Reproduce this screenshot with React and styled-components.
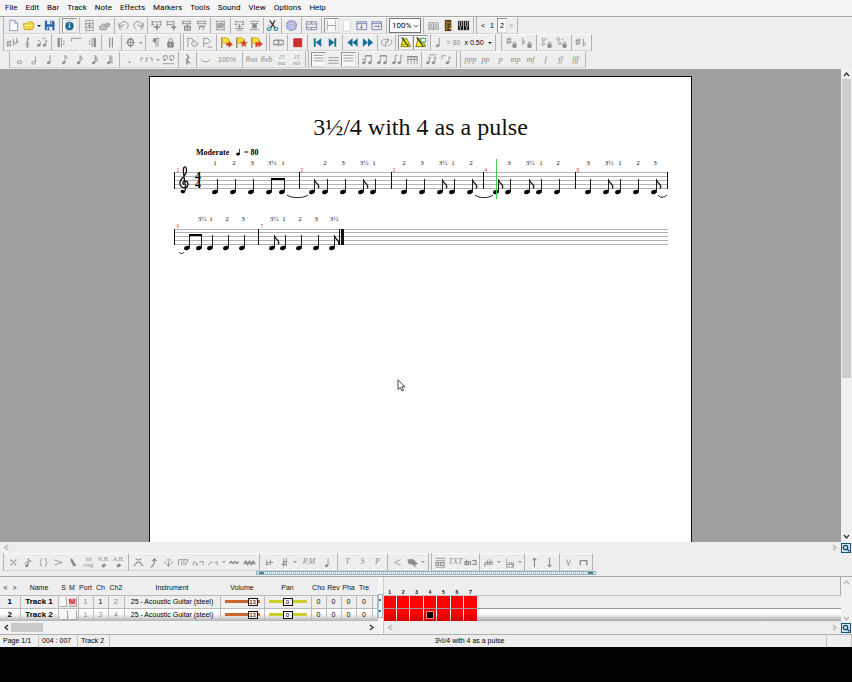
import React from "react";
import styled, { createGlobalStyle, css } from "styled-components";

const Global = createGlobalStyle`
  * { box-sizing: border-box; }
  body { margin: 0; background: #000; }
  button, select, input { font: inherit; color: inherit; margin: 0; }
`;

const LINE = "#b4b4b4";
const SANS = `"Liberation Sans", Arial, sans-serif`;
const UI = `Roboto, "Open Sans", sans-serif`;
const SERIF = `"Liberation Serif", "Times New Roman", serif`;

/* ---------- shell ---------- */

const Shell = styled.div`
  min-height: 100vh;
  padding-bottom: 35px;
  background: #000;
  display: flex;
`;
const Window = styled.div`
  flex: 1;
  min-width: 0;
  display: flex;
  flex-direction: column;
  background: #eee;
  color: #111;
  font: 7px/12px ${SANS};
`;

const MenuBar = styled.nav`
  display: flex;
  gap: 8px;
  height: 17px;
  padding: 0 5px;
  background: #f5f5f5;
  border-bottom: 1px solid #a8a8a8;
`;
const MenuItem = styled.button`
  border: 0;
  padding: 0;
  background: none;
  font: 8px/16px ${UI};
  color: #000;
`;

/* ---------- toolbars ---------- */

const Bar = styled.div`
  display: flex;
  height: ${(p) => p.$h || 17}px;
  padding-left: ${(p) => p.$indent || 3}px;
`;
const Group = styled.div`
  display: flex;
  align-items: center;
  padding: 0 ${(p) => (p.$tight ? 1 : 2)}px;
  border-right: 1px solid ${LINE};
  border-bottom: 1px solid #d4d4d4;
  border-top: 1px solid #fafafa;
`;
const Grip = styled.span`
  width: ${(p) => p.$w || 1}px;
  border-right: 1px solid ${LINE};
`;
const Tool = styled.button`
  display: flex;
  flex-direction: ${(p) => (p.$stack ? "column" : "row")};
  align-items: center;
  justify-content: center;
  width: ${(p) => p.$w || 15}px;
  height: 15px;
  padding: 0;
  border: 1px solid transparent;
  background: none;
  white-space: nowrap;
  font: ${(p) => (p.$stack ? `italic 6px/6px ${SERIF}` : p.$serif ? `italic 8px/12px ${SERIF}` : `7px/12px ${SANS}`)};
  color: ${(p) => (p.$dark ? "#000" : "#8c8c8c")};
  ${(p) =>
    p.$on &&
    css`
      background: #f8f8f8;
      border-color: #8d9296 #dcdcdc #dcdcdc #8d9296;
    `}
`;
const Drop = styled.button`
  width: 6px;
  height: 15px;
  padding: 0;
  border: 0;
  background: none;
  display: flex;
  align-items: center;
  justify-content: center;
  &::after {
    content: "";
    border: 2px solid transparent;
    border-top-color: ${(p) => (p.$dark ? "#222" : "#999")};
    border-bottom: 0;
  }
`;
const SelectWrap = styled.label`
  display: flex;
  align-items: center;
  width: 32px;
  height: 15px;
  border: 1px solid #777;
  background: #fff;
  padding-left: 2px;
`;
const Select = styled.select`
  appearance: none;
  width: 20px;
  border: 0;
  padding: 0;
  background: none;
  font: 8px/12px ${UI};
  color: #000;
`;

const N = ({ x = 5, y = 10.5, top = 2.5 }) => (
  <g>
    <ellipse cx={x} cy={y} rx="1.9" ry="1.4" fill="currentColor" stroke="none" transform={`rotate(-20 ${x} ${y})`} />
    <path d={`M${x + 1.6} ${y}V${top}`} />
  </g>
);
const Flags = ({ n }) => Array.from({ length: n }, (_, i) => <path key={i} d={`M7.6 ${2.5 + i * 2}q.5 2 3 3`} />);
const Beamed = ({ a = 3, b = 9.5, double }) => (
  <g>
    <N x={a} top={3} />
    <N x={b} top={3} />
    <path strokeWidth="1.5" d={`M${a + 1.5} 3H${b + 2}`} />
    {double && <path d={`M${a + 1.5} 5.5H${b + 2}`} />}
  </g>
);
const FLAG_MARKS = {
  right: "M7 7.5h2.500V5.500L13.500 9l-4 3.500v-2.200H7z",
  star: "M9.500 4l1 2.600h2.700l-2 1.900.8 3-2.500-1.600L7 11.500l.8-3-2-1.900h2.700z",
  turn: "M6 11.500V7h3.500V5l4 3.500-4 3.500v-2.300H8v1.800z",
};
const Flag = ({ mark = "right" }) => (
  <g>
    <path stroke="#7a6a20" strokeWidth="1.100" d="M2 1.500v11.500" />
    <path fill="#f6e13a" stroke="#c99812" strokeWidth=".8" d="M2.500 2H7l3 1.500v5L7 7.700H2.500z" />
    <path fill="#dc3a28" stroke="#b2731c" strokeWidth=".4" d={FLAG_MARKS[mark]} />
  </g>
);
const Metro = ({ x }) => (
  <g>
    <path fill="#f2ea25" stroke="#6e6c12" d="M4.500 3h4l4 8.500H2z" />
    <path stroke="#222" strokeWidth="1.200" d="m3 1.500 7 9.500" />
    {x ? <path fill="#fff" stroke="#2c7f5d" d="M7.500 2.500h5v4h-5z" /> : <path stroke="#888406" d="M2.500 9h9" />}
  </g>
);
const Lock = () => (
  <g>
    <path fill="currentColor" d="M4 6.500h6V12H4z" />
    <path d="M5.200 6.500V4.400a1.800 1.800 0 0 1 3.600 0v2.100" />
    <path stroke="#eee" d="M7 8.300v2" />
  </g>
);
const Sharp = ({ x = 0, y = 0 }) => <path d={`M${x + 2} ${y + 2}v7M${x + 4.5} ${y + 1.5}v7M${x + 0.5} ${y + 4.2}l5.5-1M${x + 0.5} ${y + 7.2}l5.5-1`} />;
const SmallLock = () => (
  <g>
    <path fill="currentColor" d="M8.500 9H12v3.200H8.500z" />
    <path d="M9 9V7.600a1.200 1.200 0 0 1 2.400 0V9" />
  </g>
);

const ICONS = {
  file: <path fill="#fff" stroke="#7c8fb0" d="M3 1.500h5.500l3 3v8H3zM8.500 1.500v3h3" />,
  open: (
    <g>
      <path fill="#f3d646" stroke="#c9a218" d="M1.500 5h3.700L7 3.300h4.600V5H13l-1.500 6.500h-9z" />
      <path stroke="#fff4a8" d="M3 7h8.500" />
    </g>
  ),
  save: (
    <g stroke="none">
      <path fill="#2a63a8" d="M2 2h9l1.400 1.400V12H2z" />
      <path fill="#e4effa" d="M4.400 2h5v3.600h-5zM4 8.300h6.200V12H4z" />
      <path fill="#2a63a8" d="M7.500 2.400h1.100v2.500H7.500zM5 9h1.600v3H5z" />
    </g>
  ),
  info: (
    <g>
      <path stroke="#b9c4cc" d="M3 1.500h8v11H3z" />
      <circle cx="7" cy="7.500" r="4" fill="#1a6c9c" stroke="#0f5480" />
      <path stroke="#fff" strokeWidth="1.400" d="M7 6.800v3M7 4.700v1.100" />
    </g>
  ),
  addpage: <path d="M3 1.500h8v11H3zM3 5h8M3 9h8M7 3v8M5 7h4" />,
  stamp: (
    <g>
      <path fill="#c8c8c8" d="M2 7.500h7v4H2zM4 5.500h8.500l-1 3H9" />
      <path d="M9 4l3.500 1.500" />
    </g>
  ),
  undo: <path d="M2 7.500 5 4c3-2.500 7-.8 7 2.800 0 2-1 3.200-2.500 4.200M5 11c-2 .5-2.800-1-2.500-2.500 2 .2 4.500-1 5-3M2 4v3.700h3.700" />,
  redo: <path d="M12 7.500 9 4C6 1.500 2 3.200 2 6.800c0 2 1 3.200 2.500 4.200M9 11c2 .5 2.800-1 2.500-2.500-2 .2-4.500-1-5-3M12 4v3.700H8.300" />,
  barplus: <g><path d="M1.500 3h11M1.500 6h3M10 6h2.500M2.500 2v5M11.500 2v5" /><path strokeWidth="1.600" d="M7.500 5v7M4 8.500h7" /></g>,
  barend: <g><path d="M1.500 3h9M1.500 6h7M2.500 2v5M9.500 2v4" /><path strokeWidth="1.600" d="M6.500 9H12M9.500 6.500V12" /></g>,
  bardel: <g><path d="M2 2.500h10M2 5h10M3 2v4M11 2v4" /><path strokeWidth="1.500" d="M5 8h6v4H5zM8 5v6" /></g>,
  barcut: <g><path d="M2 2.500h10M2 5h10M3 2v4M11 2v4M5 8v4M9 8v4" /><path strokeWidth="1.500" d="M4 8h7" /></g>,
  eye: <g><path d="M2 2.500h10M2 11.500h10M3 2v10M11 2v10" /><ellipse cx="7" cy="7" rx="3.500" ry="2.300" fill="#b5b5b5" /><path d="m4 10 6-6" /></g>,
  merge: <path d="M2 3h10M2 6h3M9 6h3M2 10h10M3 2v4M11 2v4M5 8h4M7 5v6M4 12h6" />,
  split: <g><path d="M2 2.500h10M2 11.500h10M3 5h8" /><path fill="currentColor" d="M5 6h4v3.500H5z" /><path d="m4 4 6 6M10 4l-6 6" /></g>,
  cut: (
    <g>
      <path stroke="#333" strokeWidth="1.300" d="m4 1.500 6 8.500M9.500 1.500 5 10" />
      <ellipse cx="3.400" cy="10.700" rx="2" ry="1.600" stroke="#2f87a5" strokeWidth="1.200" />
      <ellipse cx="10.700" cy="10.700" rx="2" ry="1.600" stroke="#2f87a5" strokeWidth="1.200" />
      <path stroke="#9ab" d="M1.500 7h5" />
    </g>
  ),
  gear: (
    <g>
      <circle cx="7" cy="7" r="5.300" fill="#c2c2e4" stroke="#8f8fc8" strokeWidth="1.500" strokeDasharray="2 1" />
      <circle cx="7" cy="7" r="4" fill="#cdcdf0" stroke="#a4a4d6" />
      <ellipse cx="7" cy="7" rx="1.900" ry="1.300" fill="#eee" stroke="#8f8fc8" />
    </g>
  ),
  tracks: <path stroke="#7d83a6" d="M1.500 3h11M1.500 5.500h11M1.500 9h11M1.500 11.500h11M1.500 3v8.500M7 3v2.500M7 9v2.500M12.500 3v8.500" />,
  pagewide: <path stroke="#9aa0aa" d="M2.500 1.500v11M11.500 1.500v11M2.500 7h9" />,
  pageblank: <path fill="#fff" stroke="#ccd" d="M3.500 1h7.500v12H3.500z" />,
  down: <path stroke="#647aa8" d="M2 3h10.500v8.500H2zM2 5h10.500M7 6v4M5.400 8.400 7 10l1.700-1.600" />,
  right: <path stroke="#647aa8" d="M2 3h10.500v8.500H2zM2 5h10.500M4 8h6M8.500 6.500 10 8 8.500 9.600" />,
  chevron: <path stroke="#333" strokeWidth="1.300" d="m3 5 4 4 4-4" />,
  book: <g><path fill="#ddd" d="M2 4.500c2-1 3.500-1 5 0 1.500-1 3-1 5 0v7c-2-1-3.500-1-5 0-1.500-1-3-1-5 0zM7 4.500v7" /><path d="M3.500 6.500h2M8.500 6.500h2M3.500 8.500h2M8.500 8.500h2" /></g>,
  neck: (
    <g stroke="none">
      <path fill="#4b3115" d="M3 1h7v12H3z" />
      <path fill="#a4762e" d="M4 2h2v10H4zM7 6.500h3v1H7z" />
      <circle cx="8" cy="4" r="1.200" fill="#b88b39" />
      <circle cx="9" cy="10" r="1.500" fill="#c99c49" />
    </g>
  ),
  piano: (
    <g>
      <path fill="#111" stroke="none" d="M1 2h12v10H1z" />
      <path stroke="#fff" strokeWidth=".8" d="M3.500 8v4M6.900 2v10M10.500 8v4M2.400 2v6M4.700 2v6M9.300 2v6M11.600 2v6" />
    </g>
  ),
  keysig: <g><Sharp y={3} /><path d="M8 3v7c3-1 3-4 0-3M11.500 2v6M11.500 5.500c2-1 2 1 0 2.500" /></g>,
  clef: <path d="M8 12c-2 1-3-1-1.500-1.500M7 12V2c2 0 1.500 2.500-.5 4s-2 4 .5 4 2-3 0-3" />,
  triplet: <g><N x={3} y={10} top={6} /><N x={9} y={10} top={4} /><path d="M10.600 4l2 2M2 5h2M7 2.500h3" /></g>,
  repL: <g><path strokeWidth="2.500" d="M4 2v10" /><path d="M7 2v10" /><path d="M9.500 5v1.500M9.500 8v1.500" strokeWidth="1.500" /></g>,
  volta: <path d="M1.500 6V2.500h11" />,
  repR: <g><path strokeWidth="2.500" d="M10.500 2v10" /><path d="M7.500 2v10" /><path d="M5 5v1.500M5 8v1.500" strokeWidth="1.500" /></g>,
  dbl: <path d="M5 1.500v11M8 1.500v11" strokeWidth="1.200" />,
  coda: <g><ellipse cx="7" cy="7" rx="3" ry="3.700" strokeWidth="1.500" /><path d="M7 1.500v11M2 7h10" /></g>,
  pilcrow: <path d="M7 2.500h4M7.500 2.500v9M9.700 2.500v9M7 2.500c-3.500 0-3.500 4.500 0 4.500z" fill="currentColor" />,
  lock: <Lock />,
  mark1: <g><path d="M2 2v10M2 2.500h4l2 3" /><path fill="#e4e4e4" d="M5.500 8 9 5l4 3.500L9 12z" /></g>,
  mark2: <g><path d="M3 2v10M3 2.500h4l3 3-2 2.500H3M7 12h5" /></g>,
  flagR: <Flag />,
  flagS: <Flag mark="star" />,
  flagT: <Flag mark="turn" />,
  link: <g><circle cx="4.500" cy="7" r="3" /><circle cx="9.500" cy="7" r="3" /><path d="M1 5h12M1 9h12M7 3v8" /></g>,
  stop: <path fill="#cf2e2e" stroke="#b92424" d="M3 3h8.500v8.500H3z" />,
  first: <path fill="#176e96" stroke="none" d="M3 2.500h2v9H3zM11 2.500v9L5 7z" />,
  last: <path fill="#176e96" stroke="none" d="M9 2.500h2v9H9zM3 2.500v9L9 7z" />,
  rew: <path fill="#176e96" stroke="none" d="M7 2.500v9L1.500 7zM12.500 2.500v9L7 7z" />,
  fwd: <path fill="#176e96" stroke="none" d="M2 2.500v9L7.500 7zM7.500 2.500v9L13 7z" />,
  loop: <path d="M5 10H3.500C1 9 1 5 3.500 4H9M7.500 2 9.500 4l-2 2M8 10h1.500c4-1 4-5 1.500-6M6 12V7l3-1" />,
  metro1: <Metro />,
  metro2: <Metro x />,
  tempo: <g><N x={4} top={2} /></g>,
  sharpLock: <g><Sharp x={1} y={0} /><SmallLock /></g>,
  flatLock: <g><path d="M3 2v7c3-1.500 3-4.500 0-3" /><SmallLock /></g>,
  dotsUp: <g><circle cx="3.500" cy="4" r="1.400" /><circle cx="3.500" cy="8.500" r="1.400" /><path d="M6 3h2" /><SmallLock /></g>,
  dotsDn: <g><circle cx="3.500" cy="3.500" r="1.400" /><circle cx="5" cy="8" r="1.400" /><path d="M7 4h2" /><SmallLock /></g>,
  sharpFlat: <g><Sharp x={0} y={1} /><path d="M9 3v8c3-1.500 3-4.500 0-3" /></g>,
  whole: <ellipse cx="7" cy="10" rx="2.500" ry="1.600" />,
  half: <g><ellipse cx="6" cy="10.500" rx="2" ry="1.400" /><path d="M8 10V4" /></g>,
  quarter: <N x={6} />,
  n8: <g><N x={6} /><Flags n={1} /></g>,
  n16: <g><N x={6} /><Flags n={2} /></g>,
  n32: <g><N x={6} /><Flags n={3} /></g>,
  n64: <g><N x={6} /><Flags n={4} /></g>,
  dot: <circle cx="7" cy="10" r="1" fill="currentColor" stroke="none" />,
  tup: <path d="M1 9V5.500h2.500M10.500 5.500H13V9M5.500 5.500H8L6.500 7c2 0 2 2.500-.8 2" />,
  pairs: <g><path d="M1.500 3v4M5.500 3v4M8.500 3v4M12.500 3v4M1.500 3h4M8.500 3h4M1 11.500h12" /><path strokeWidth="2" d="M2 7.500h2M9 7.500h2" /></g>,
  rest: <path d="M6 1.500 8.500 5 6 7l2.500 3c-3-1-3 1-1.500 2.500" strokeWidth="1.500" />,
  slur: <path d="M2 7c2 3.200 8 3.200 10 0" />,
  lines1: <path d="M1.500 2.500h11M1.500 5.500h11M1.500 8.500h11" />,
  lines2: <path d="M1.500 5h11M1.500 8h11M1.500 11h11" />,
  beam1: <g><Beamed /><path d="M1 7h3" /></g>,
  beam2: <Beamed />,
  beam3: <g><N x={3} /><N x={9} /><path d="M4.500 2.500H7M10.500 2.500H12" /></g>,
  beam4: <g><path strokeWidth="1.500" d="M1.500 4h11" /><path d="M2 4v8M5.500 4v8M9 4v8M12 4v8M2 7h10" /></g>,
  beam5: <g><N x={3} top={4} /><N x={9} top={4} /><path d="M4.500 2h7M4.500 4l2 2M10.500 4l2 2" /></g>,
  beam6: <g><path d="M2 3h4M2 3v3" /><N x={8} top={4} /><path d="M9.600 4l2.500 2" /></g>,
  cross: <path strokeWidth="1.500" strokeDasharray="2 1" d="m4 4 6 6M10 4l-6 6" />,
  grace: <g><N x={5} /><path d="M6.600 2.500c.5 2 3 2 3 4M3 8l7-3" /></g>,
  paren: <path d="M5 2.500q-3 4.500 0 9M9 2.500q3 4.500 0 9" />,
  accent: <path d="m3 4.500 8 2.500-8 2.500" />,
  marcato: <path d="M4 4l3 7 2.500-1-2-3L5 3z" fill="currentColor" />,
  hammer: <g><path d="M2 11 6 6M12 11 8 6M4 3l3 1.500L10 3M5 7h4" strokeWidth="1.200" /></g>,
  bend: <path strokeWidth="1.200" d="M4 12c3-1 4-3 4-8M5.500 5.500 8 3l2.500 2.500" />,
  tremolo: <path d="m2 6 5 5 5-5M7 11V5M5 5l2-2 2 2" />,
  slide: <path d="M1.500 10V4h6v6M7.500 4H12M9 10l3-6M4 7l1-1v4" />,
  legato: <path d="M1.500 10V7c1-1 2-1 3 0v3M6 10V8M8 6h4v4" />,
  trill: <path d="M2 10c0-3 2-4 4-3M8 8c1-2 3-2 3-2v4" />,
  vib: <path strokeWidth="1.500" d="m1.500 8 2-2 2 2 2-2 2 2 2-2" />,
  vibw: <path strokeWidth="2" d="m1 9 2-3 2 3 2-3 2 3 2-3 2 3" />,
  trem: <path d="M4 4v6M4 7h7M8 4v6M2.500 9h4" />,
  strike: <g><path strokeWidth="1.500" d="M5 6h5M4 9h5" /><path d="M6 3v9M9 2v9" /></g>,
  stac: <N x={6} />,
  less: <path d="M10 4 4 7l6 3" />,
  brush: <g><path fill="currentColor" d="M2 4h6l4 4-2 2-3-1-4-1z" /><path d="m7 10 4 2" /></g>,
  diagram: <g><path d="M2 2.500h10M2 5h10M2 12h10" /><path d="M2 10V7h3v3zM7 7h4v3H7z" strokeWidth="1.200" /></g>,
  midi: <path strokeWidth="1.200" d="M1 6h4v3H1zM7 5v5M9 5h4v4H9M3 4v6" />,
  hand1: <g><path d="M3 12V7M3 7h8M6 4v5M8.500 3v6M11 5v4M3 9h8" /></g>,
  hand2: <g><path d="M4 3v6M4 9h7v3H4zM7 6v3M9 6v3M11 6v6" /></g>,
  up: <path strokeWidth="1.200" d="M7 12V2.500M5 4.500l2-2 2 2" />,
  dn: <path strokeWidth="1.200" d="M7 2v9.500M5 9.500l2 2 2-2" />,
  upbow: <path d="m5 4 2 6 2-6" />,
  downbow: <path strokeWidth="1.500" d="M3.500 10V5h7v5" />,
};

const Svg = styled.svg`
  display: block;
  flex: none;
  width: ${(p) => p.$s || 13}px;
  height: ${(p) => p.$s || 13}px;
`;
const Icon = ({ name, size }) => (
  <Svg $s={size} viewBox="0 0 14 14" fill="none" stroke="currentColor" strokeWidth="0.9" aria-hidden="true">
    {ICONS[name]}
  </Svg>
);

/* An item is an icon name, "v" / "V" for a drop arrow, or an object with its options. */
const ToolItem = ({ item }) => {
  if (item === "v" || item === "V") return <Drop $dark={item === "V"} aria-label="More" />;
  const it = typeof item === "string" ? { icon: item } : item;
  return (
    <Tool $w={it.w} $on={it.on} $dark={it.dark} $serif={it.serif} $stack={!!it.sub} aria-label={it.icon || it.text}>
      {it.icon && <Icon name={it.icon} />}
      {it.sub ? <span>{it.text}</span> : it.text}
      {it.sub && <span>{it.sub}</span>}
    </Tool>
  );
};

const s = (text, sub) => ({ text, sub, serif: true });

const ROW1 = [
  { items: ["file", "open", "V", "save"] },
  { items: [{ icon: "info", on: true }] },
  { items: ["addpage", "stamp"] },
  { items: ["undo", "redo"], tight: true },
  { items: ["barplus", "barend", "bardel", "barcut"], tight: true },
  { items: ["eye"] },
  { items: ["merge", "split"], tight: true },
  { items: ["cut"], tight: true },
  { items: ["gear"] },
  { items: ["tracks"] },
  { items: [{ icon: "pagewide", on: true }, "pageblank", "down", "right"] },
  { zoom: true },
  { items: ["book", "neck", "piano"] },
  { grip: 3, items: [{ text: "<", w: 8, dark: true }, { text: "1", w: 10, dark: true }, { text: "2", w: 10, dark: true, on: true }, { text: ">", w: 8 }] },
];
const ROW2 = [
  { items: ["keysig", "clef", "triplet"], tight: true },
  { items: ["repL", "volta", "repR"] },
  { items: ["dbl"] },
  { items: ["coda", "v"], tight: true },
  { items: ["pilcrow", "lock"] },
  { grip: 3, items: ["mark1", "mark2"], tight: true },
  { items: ["flagR", "flagS", "flagT"] },
  { grip: 3, items: ["link"], tight: true },
  { items: ["stop"] },
  { items: ["first", "last"] },
  { items: ["rew", "fwd"] },
  { items: ["loop"], tight: true },
  { items: [{ icon: "metro1", on: true }, { icon: "metro2", on: true }] },
  { items: [{ icon: "tempo", text: "= 80", w: 28 }, { text: "x 0.50", w: 26, dark: true }, "V"] },
  { grip: 6, items: ["sharpLock", "flatLock"] },
  { items: ["dotsUp", "dotsDn"] },
  { items: ["sharpFlat"] },
];
const ROW3 = [
  { items: ["whole", "half", "quarter", "n8", "n16", "n32", "n64"] },
  { items: ["dot", { icon: "tup", w: 18 }, "v", "pairs"] },
  { items: ["rest"], tight: true },
  { items: ["slur", { text: "100%", w: 28 }], tight: true },
  { items: [s("8va"), s("8vb"), s("15", "ma"), s("15", "mb")], tight: true },
  { grip: 3, items: [{ icon: "lines1", on: true }, "lines2", { icon: "lines1", on: true }] },
  { items: ["beam1", "beam2", "beam3", "beam4"], tight: true },
  { items: ["beam5", "beam6"] },
  { grip: 4, items: ["ppp", "pp", "p", "mp", "mf", "f", "ff", "fff"].map((t) => s(t)) },
];
const ROW4 = [
  { items: ["cross", "grace", "paren", "accent", "marcato", s("let", "ring"), s("N.H.", "◆"), s("A.H.", "◆")] },
  { items: ["hammer", "bend", "tremolo", "slide", "legato", "trill", "v", "vib", "vibw"] },
  { items: ["trem", "strike", "v", { text: "P.M", w: 22, serif: true }, "stac"] },
  { items: [s("T"), s("S"), s("P")] },
  { items: ["less", "brush", "v"] },
  { grip: 3, items: ["diagram", s("TXT"), "midi"], tight: true },
  { items: ["hand1", "v", "hand2", "v"], tight: true },
  { items: ["up", "dn"] },
  { items: ["upbow", "downbow"], tight: true },
];

const Toolbar = ({ groups, indent, h, label }) => (
  <Bar $indent={indent} $h={h} role="toolbar" aria-label={label}>
    <Grip />
    {groups.map((g, i) => (
      <React.Fragment key={i}>
        {g.grip && <Grip $w={g.grip} />}
        <Group $tight={g.tight}>
          {g.zoom ? (
            <SelectWrap>
              <Select aria-label="Zoom" defaultValue="100%">
                <option>100%</option>
              </Select>
              <Icon name="chevron" size={8} />
            </SelectWrap>
          ) : (
            g.items.map((it, j) => <ToolItem key={j} item={it} />)
          )}
        </Group>
      </React.Fragment>
    ))}
  </Bar>
);

/* ---------- score ---------- */

const Workspace = styled.div`
  flex: 1;
  min-height: 0;
  display: flex;
  margin-top: 1px;
`;
const Canvas = styled.main`
  position: relative;
  flex: 1;
  display: flex;
  justify-content: center;
  padding-top: 7px;
  background: #9f9f9f;
`;
const Page = styled.article`
  width: 100%;
  max-width: 543px;
  padding-top: 35px;
  background: #fff;
  border: 1px solid #111;
  border-bottom: 0;
`;
const Title = styled.h1`
  margin: 0;
  padding-bottom: 1px;
  text-align: center;
  color: #111;
  font: 24px/30px ${SERIF};
`;
const ScoreSvg = styled.svg`
  display: block;
  width: 100%;
`;
const Cursor = styled.svg`
  position: absolute;
  left: 397px;
  top: 310px;
  width: 9px;
  height: 13px;
`;

const NOTES1 = [215, 233, 251, "269b", "282b", "312f", 325, 343, "361f", 373, 404, 422, "440f", 452, "470f", "496f", 508, "527f", 539, 557, 588, "606f", 618, 636, "654f"];
const NOTES2 = ["187b", "199b", 210, 226, 242, "272f", 283, 299, 316, "332f"];
const BEATS1 = [[215, 1], [234, 2], [252, 3], [272, "3½"], [283, 1], [325, 2], [343, 3], [364, "3½"], [374, 1], [404, 2], [422, 3], [443, "3½"], [453, 1], [471, 2], [509, 3], [530, "3½"], [541, 1], [558, 2], [588, 3], [609, "3½"], [620, 1], [638, 2], [655, 3]];
const BEATS2 = [[202, "3½"], [211, 1], [227, 2], [243, 3], [274, "3½"], [284, 1], [300, 2], [316, 3], [334, "3½"]];

const Notes = ({ list, y }) =>
  list.map((n) => {
    const x = parseInt(n, 10);
    const flag = String(n).endsWith("f");
    return (
      <g key={n}>
        <ellipse cx={x} cy={y} rx="3" ry="2" fill="#000" transform={`rotate(-20 ${x} ${y})`} />
        <path d={`M${x + 2.5} ${y}V${y - 13}`} stroke="#222" />
        {flag && <path d={`M${x + 2.5} ${y - 12}q1 2.500 3 4 2 2 .8 4.500`} stroke="#222" strokeWidth="1.300" fill="none" />}
      </g>
    );
  });
const Beats = ({ list, y }) => (
  <g fontFamily={SERIF} fontSize="7" fill="#222" textAnchor="middle">
    {list.map(([x, t]) => (
      <text key={x} x={x} y={y}>{t}</text>
    ))}
  </g>
);

const Score = () => (
  <ScoreSvg viewBox="150 143 541 116" role="img" aria-label="Score, seven bars in 4/4">
    <g fontFamily={SERIF} fontWeight="bold" fontSize="8" fill="#000">
      <text x="196" y="155">Moderate</text>
      <text x="244" y="155">= 80</text>
    </g>
    <ellipse cx="238" cy="154" rx="1.900" ry="1.500" />
    <path d="M239.500 154v-5" stroke="#111" strokeWidth=".8" />

    <path stroke="#b3b3b3" d="M174 172.500H668M174 176.500H668M174 180.500H668M174 184.500H668M174 188.500H668" />
    <path stroke="#b0b0b0" d="M174 229.500H668M174 232.500H668M174 236.500H668M174 240.500H668M174 244.500H668" />
    <path stroke="#111" d="M174.500 172v17M299.500 172v17M391.500 172v17M483.500 172v17M575.500 172v17M667.500 172v17M174.500 229v16M258.500 229v16M339.500 229v16" />
    <path stroke="#111" strokeWidth="3" d="M342.500 229v16" />

    <path fill="none" stroke="#111" strokeWidth="1.300" d="M184 184.500c-2-1-1.500-3.700 1-3.700 3.900.2 3.800 6.600 0 6.900-5.500.3-6.500-5.500-3.200-9 2.700-2.800 5-5 4.700-8.700-.1-3-2-4.300-2.900-1.700-.9 2.700.2 7.200 1.700 16.700.6 5-.6 8-2.600 8" />
    <circle cx="182.500" cy="191.500" r="1.800" />
    <g fontFamily={SERIF} fontWeight="bold" fontSize="12" fill="#000">
      <text x="195" y="180">4</text>
      <text x="195" y="188">4</text>
    </g>

    <Notes list={NOTES1} y={192} />
    <Notes list={NOTES2} y={248} />
    <path stroke="#000" strokeWidth="2" d="M271 179H285M189 235H202" />
    <path stroke="#222" fill="none" d="M287 195c4 3.500 17 3.500 21 0M475 195c4 3.500 14 3.500 18 0M658 195c2 3 6 3 9 0M179 252c1 2 4 2 5 0" />

    <Beats list={BEATS1} y={165} />
    <Beats list={BEATS2} y={221} />
    <g fontFamily={SANS} fontSize="5" fill="#e04848" textAnchor="middle">
      <text x="178" y="172">1</text>
      <text x="302" y="172">2</text>
      <text x="394" y="172">3</text>
      <text x="486" y="172">4</text>
      <text x="578" y="172">5</text>
      <text x="178" y="228">6</text>
      <text x="262" y="228">7</text>
    </g>
    <path stroke="#3fd24c" d="M496.500 159v40" />
  </ScoreSvg>
);

/* ---------- scroll bars ---------- */

const VScroll = styled.div`
  display: flex;
  flex-direction: column;
  align-items: center;
  width: 11px;
  padding: 1px 1px;
  background: #f1f1f1;
  color: ${(p) => (p.$off ? "#b5b5b5" : "#333")};
`;
const VTrack = styled.div`
  flex: 1;
  width: 100%;
`;
const VThumb = styled.div`
  width: 100%;
  height: 66%;
  background: #cdcdcd;
`;
const HScroll = styled.div`
  display: flex;
  align-items: center;
  flex: ${(p) => (p.$w ? `0 0 ${p.$w}px` : 1)};
  height: ${(p) => p.$h || 11}px;
  padding: 0 2px;
  background: ${(p) => (p.$w ? "#f1f1f1" : "#eee")};
  color: ${(p) => (p.$off ? "#b5b5b5" : "#333")};
`;
const HTrack = styled.div`
  flex: 1;
  height: 9px;
`;
const HThumb = styled.div`
  width: 32px;
  height: 100%;
  background: #cacaca;
`;
const ArrowBtn = styled.button`
  display: flex;
  width: 9px;
  height: 9px;
  padding: 0;
  border: 0;
  background: none;
`;
const LensBtn = styled.button`
  display: flex;
  align-items: center;
  justify-content: center;
  width: 10px;
  height: 10px;
  margin-right: 1px;
  padding: 0;
  border: 1px solid #1d516f;
  background: #d3e8f3;
`;
const ARROWS = { up: "M2 6l2.500-3L7 6", down: "M2 3l2.500 3L7 3", left: "M6 2 3 4.500 6 7", right: "M3 2l3 2.500L3 7" };
const Arrow = ({ dir }) => (
  <ArrowBtn aria-label={`Scroll ${dir}`}>
    <svg width="9" height="9" viewBox="0 0 9 9" fill="none" stroke="currentColor" strokeWidth="1.300">
      <path d={ARROWS[dir]} />
    </svg>
  </ArrowBtn>
);
const Lens = () => (
  <LensBtn aria-label="Zoom">
    <svg width="8" height="8" viewBox="0 0 8 8" fill="none" stroke="#16465f" strokeWidth="1.300">
      <circle cx="3.500" cy="3.500" r="2.200" />
      <path d="m5 5 2.500 2.500" />
    </svg>
  </LensBtn>
);
const Line = styled.div`
  display: flex;
  align-items: center;
`;

const Splitter = styled.div`
  display: flex;
  justify-content: center;
  height: 6px;
  border-bottom: 1px solid #a9a9a9;
`;
const SplitHandle = styled.div`
  display: flex;
  justify-content: space-between;
  width: 40%;
  height: 4px;
  padding: 0 2px;
  border: 1px solid #8fb3c4;
  background: repeating-linear-gradient(90deg, #b3c9d4 0 1px, #f8fbfc 1px 2px);
  &::before,
  &::after {
    content: "";
    width: 5px;
    background: #4c7f98;
  }
`;

/* ---------- tracks ---------- */

const Tracks = styled.section`
  display: flex;
  height: 57px;
`;
const TrackPane = styled.div`
  flex: 0 0 377px;
`;
const BarPane = styled.div`
  flex: 1;
  min-width: 0;
`;
const TrackTable = styled.table`
  width: 377px;
  table-layout: fixed;
  border-collapse: collapse;
`;
const Th = styled.th`
  height: 18px;
  padding: 4px 0 0;
  font: 7px/12px ${SANS};
  white-space: nowrap;
  overflow: visible;
`;
const HeadText = styled.span`
  display: flex;
  justify-content: center;
  gap: ${(p) => p.$gap || 0}px;
`;
const Row = styled.tr`
  height: 13px;
  border-top: 1px solid #b9b9b9;
  background: ${(p) => (p.$sel ? "linear-gradient(#fff 40%, #b4b4b4)" : "#eee")};
`;
const Td = styled.td`
  padding: 0;
  border-right: 1px solid #bbb;
  text-align: center;
  white-space: nowrap;
  color: ${(p) => (p.$dim ? "#8a8a8a" : "#000")};
  font: ${(p) => (p.$bold ? `bold 8px/12px ${SANS}` : `7px/12px ${SANS}`)};
`;
const Toggles = styled.div`
  display: flex;
  height: 10px;
  gap: 1px;
  padding: 0 1px;
`;
const Toggle = styled.button`
  flex: 1;
  padding: 0;
  border: 1px solid;
  border-color: #f4f4f4 #a5a5a5 #a5a5a5 #f4f4f4;
  background: ${(p) => (p.$lit ? "#f7c9cd" : "#f6f6f6")};
  color: #d3122b;
  font: bold 8px/8px ${SANS};
`;
const SlideBox = styled.label`
  position: relative;
  display: flex;
  align-items: center;
  height: 12px;
  padding: 0 4px;
`;
const Range = styled.input`
  appearance: none;
  width: 100%;
  height: 3px;
  background: ${(p) => p.$c};
  &::-webkit-slider-thumb {
    appearance: none;
    width: 10px;
    height: 8px;
    border: 1px solid #111;
    background: #f4f4f4;
  }
`;
const Value = styled.span`
  position: absolute;
  left: ${(p) => p.$left};
  width: 10px;
  text-align: center;
  font: 6px/8px ${SANS};
  pointer-events: none;
`;
const Divider = styled.div`
  display: flex;
  align-items: center;
  flex: 0 0 6px;
  background: #f5f5f5;
  border-right: 1px solid #ccc;
`;
const DividerGrip = styled.div`
  display: flex;
  flex-direction: column;
  justify-content: space-around;
  align-items: center;
  width: 5px;
  height: 24px;
  border: 1px solid #9db8c6;
  background: #fff;
  &::before,
  &::after {
    content: "";
    width: 2px;
    height: 2px;
    background: #356f8c;
  }
`;
const BarHead = styled.div`
  height: 18px;
  padding-top: 8px;
  border-right: 1px solid #aaa;
`;
const Cells = styled.div`
  display: grid;
  grid-template-columns: repeat(7, 1fr);
  gap: 1px;
  width: 93px;
  height: 12px;
`;
const BarNo = styled.span`
  text-align: center;
  font: bold 5px/14px ${SANS};
`;
const BarRow = styled.div`
  height: 13px;
  border-top: 1px solid ${(p) => (p.$sel ? "#999" : "#c6c6c6")};
  background: ${(p) => (p.$sel ? "linear-gradient(#fff 40%, #a6a6a6)" : "#eee")};
`;
const Cell = styled.button`
  display: flex;
  align-items: center;
  justify-content: center;
  padding: 0;
  border: 0;
  background: ${(p) => (p.$sel ? "linear-gradient(#fd0000 40%, #cf0000)" : "#fd0000")};
`;
const Now = styled.span`
  width: 8px;
  height: 8px;
  border: 1px solid #d88;
  background: #080000;
`;

const COLS = [20, 38, 20, 15, 15, 16, 96, 44, 47, 15, 15, 15, 16, 5];
const HEADS = ["Port", "Ch", "Ch2", "Instrument", "Volume", "Pan", "Cho", "Rev", "Pha", "Tre", ""];
const TRACKS = [
  { n: 1, muted: true, port: 1, ch: 1, ch2: 2 },
  { n: 2, sel: true, port: 1, ch: 3, ch2: 4 },
];

const TrackRow = ({ t }) => (
  <Row $sel={t.sel}>
    <Td $bold>{t.n}</Td>
    <Td $bold>Track {t.n}</Td>
    <Td>
      <Toggles>
        <Toggle aria-label="Solo" />
        <Toggle $lit={t.muted} aria-label="Mute">{t.muted ? "M" : ""}</Toggle>
      </Toggles>
    </Td>
    <Td $dim>{t.port}</Td>
    <Td $dim={t.sel}>{t.ch}</Td>
    <Td $dim>{t.ch2}</Td>
    <Td>25 - Acoustic Guitar (steel)</Td>
    <Td>
      <SlideBox>
        <Range type="range" $c="#c9672f" min="0" max="16" defaultValue="15" aria-label="Volume" />
        <Value $left="calc(100% - 16px)">13</Value>
      </SlideBox>
    </Td>
    <Td>
      <SlideBox>
        <Range type="range" $c="#cbd02c" min="-8" max="8" defaultValue="0" aria-label="Pan" />
        <Value $left="calc(50% - 5px)">0</Value>
      </SlideBox>
    </Td>
    {[0, 1, 2, 3].map((i) => (
      <Td key={i}>0</Td>
    ))}
    <Td />
  </Row>
);

const Status = styled.footer`
  display: flex;
  height: 13px;
  border-top: 1px solid #b0b0b0;
  line-height: 12px;
  color: #000;
`;
const StatusCell = styled.span`
  flex: ${(p) => (p.$w ? `0 0 ${p.$w}px` : 1)};
  padding-left: 3px;
  border-right: 1px solid #c4c4c4;
  text-align: ${(p) => (p.$w ? "left" : "center")};
`;

const MENUS = ["File", "Edit", "Bar", "Track", "Note", "Effects", "Markers", "Tools", "Sound", "View", "Options", "Help"];

export default function App() {
  return (
    <Shell>
      <Global />
      <Window>
        <MenuBar>
          {MENUS.map((m) => (
            <MenuItem key={m}>{m}</MenuItem>
          ))}
        </MenuBar>
        <Toolbar groups={ROW1} label="File and view" />
        <Toolbar groups={ROW2} label="Playback" />
        <Toolbar groups={ROW3} indent={9} label="Notes" />

        <Workspace>
          <Canvas>
            <Page>
              <Title>3½/4 with 4 as a pulse</Title>
              <Score />
            </Page>
            <Cursor viewBox="0 0 9 13">
              <path d="M1 .8v9.700l2.300-2.100 1.600 3.600 1.600-.7-1.600-3.500H8z" fill="#fff" stroke="#333" strokeWidth=".9" />
            </Cursor>
          </Canvas>
          <VScroll>
            <Arrow dir="up" />
            <VTrack>
              <VThumb />
            </VTrack>
            <Arrow dir="down" />
          </VScroll>
        </Workspace>
        <Line>
          <HScroll $off>
            <Arrow dir="left" />
            <HTrack />
            <Arrow dir="right" />
          </HScroll>
          <Lens />
        </Line>

        <Toolbar groups={ROW4} h={18} label="Effects" />
        <Splitter>
          <SplitHandle />
        </Splitter>

        <Tracks>
          <TrackPane>
            <TrackTable>
              <colgroup>
                {COLS.map((w, i) => (
                  <col key={i} width={w} />
                ))}
              </colgroup>
              <thead>
                <tr>
                  <Th><HeadText $gap={5}><span>&lt;</span><span>&gt;</span></HeadText></Th>
                  <Th>Name</Th>
                  <Th><HeadText $gap={3}><span>S</span><span>M</span></HeadText></Th>
                  {HEADS.map((h) => (
                    <Th key={h}><HeadText>{h}</HeadText></Th>
                  ))}
                </tr>
              </thead>
              <tbody>
                {TRACKS.map((t) => (
                  <TrackRow key={t.n} t={t} />
                ))}
              </tbody>
            </TrackTable>
            <HScroll $w={377} $h={13}>
              <Arrow dir="left" />
              <HTrack>
                <HThumb />
              </HTrack>
              <Arrow dir="right" />
            </HScroll>
          </TrackPane>
          <Divider>
            <DividerGrip />
          </Divider>
          <BarPane>
            <BarHead>
              <Cells>
                {[1, 2, 3, 4, 5, 6, 7].map((n) => (
                  <BarNo key={n}>{n}</BarNo>
                ))}
              </Cells>
            </BarHead>
            {TRACKS.map((t) => (
              <BarRow key={t.n} $sel={t.sel}>
                <Cells>
                  {[1, 2, 3, 4, 5, 6, 7].map((n) => (
                    <Cell key={n} $sel={t.sel} aria-label={`Track ${t.n}, bar ${n}`}>
                      {t.sel && n === 4 && <Now />}
                    </Cell>
                  ))}
                </Cells>
              </BarRow>
            ))}
            <HScroll $off $h={13}>
              <Arrow dir="left" />
              <HTrack />
              <Arrow dir="right" />
            </HScroll>
          </BarPane>
          <VScroll $off>
            <Arrow dir="up" />
            <VTrack />
            <Arrow dir="down" />
            <Lens />
          </VScroll>
        </Tracks>

        <Status>
          <StatusCell $w={39}>Page 1/1</StatusCell>
          <StatusCell $w={39}>004 : 007</StatusCell>
          <StatusCell $w={32}>Track 2</StatusCell>
          <StatusCell>3½/4 with 4 as a pulse</StatusCell>
          <StatusCell $w={25} />
        </Status>
      </Window>
    </Shell>
  );
}
